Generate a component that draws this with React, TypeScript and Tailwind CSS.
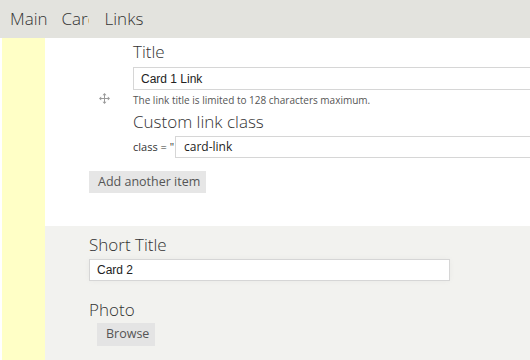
import React from "react";

const sans = { fontFamily: '"Open Sans", "Liberation Sans", sans-serif' };
const arial = { fontFamily: '"Liberation Sans", Arial, sans-serif' };

function DragIcon() {
  return (
    <svg width="11" height="11" viewBox="0 0 11 11" fill="#9a9a9a">
      <rect x="5" y="1.5" width="1" height="8" />
      <rect x="1.5" y="5" width="8" height="1" />
      <path d="M5.5 0 L7.5 2.2 L3.5 2.2 Z" />
      <path d="M5.5 11 L7.5 8.8 L3.5 8.8 Z" />
      <path d="M0 5.5 L2.2 3.5 L2.2 7.5 Z" />
      <path d="M11 5.5 L8.8 3.5 L8.8 7.5 Z" />
    </svg>
  );
}

export default function App() {
  return (
    <div className="w-[530px] h-[360px] overflow-hidden bg-white flex flex-col" style={sans}>
      <div className="h-[38px] bg-[#e3e3de] flex items-center text-[17px] font-light text-[#333] shrink-0">
        <span className="ml-[10px]">Main</span>
        <span className="ml-[14px] w-[27px] overflow-hidden whitespace-nowrap">Card</span>
        <span className="ml-[16px]">Links</span>
      </div>
      <div className="flex flex-1 pl-[2px]">
        <div className="w-[43px] bg-[#ffffc6] shrink-0" />
        <div className="flex-1 flex flex-col min-w-0 overflow-hidden">
          <div className="h-[188px] bg-white pl-[44px] shrink-0">
            <div className="flex">
              <div className="w-[44px] shrink-0 flex flex-col">
                <div className="h-[55px]" />
                <div className="pl-[10px]">
                  <DragIcon />
                </div>
              </div>
              <div className="flex-1 min-w-0">
                <div className="h-[24px] leading-[24px] mt-[2px] text-[17px] font-light text-[#333]">Title</div>
                <div className="mt-[3px] h-[23px] border border-[#d6d6d6] bg-white w-[420px] flex items-center pl-[7px] text-[12px] text-[#222]" style={arial}>
                  Card 1 Link
                </div>
                <div className="mt-[3px] h-[14px] leading-[14px] text-[10px] text-[#555]">
                  The link title is limited to 128 characters maximum.
                </div>
                <div className="mt-[3px] h-[24px] leading-[24px] text-[17px] font-light text-[#333]">Custom link class</div>
                <div className="mt-[2px] flex items-center h-[22px]">
                  <span className="text-[11px] text-[#333] w-[42px] shrink-0 whitespace-nowrap">class = "</span>
                  <div className="h-[22px] border border-[#d6d6d6] w-[420px] shrink-0 flex items-center pl-[8px] text-[12px] text-[#222]">
                    card-link
                  </div>
                </div>
              </div>
            </div>
            <div className="mt-[13px] inline-flex items-center h-[22px] w-[117px] bg-[#e6e6e6] pl-[9px] text-[12.5px] text-[#555]">
              Add another item
            </div>
          </div>
          <div className="flex-1 bg-[#f2f2ef] pl-[44px]">
            <div className="mt-[7px] h-[24px] leading-[24px] text-[17px] font-light text-[#333]">Short Title</div>
            <div className="mt-[2px] h-[22px] w-[361px] border border-[#d6d6d6] bg-white flex items-center pl-[7px] text-[12px] text-[#222] shadow-[0_0_6px_rgba(0,0,0,0.04)]" style={arial}>
              Card 2
            </div>
            <div className="mt-[19px] h-[20px] leading-[20px] text-[17px] font-light text-[#333]">Photo</div>
            <div className="ml-[8px] inline-flex items-center h-[23px] w-[58px] bg-[#e4e4e4] pl-[9px] text-[12.5px] text-[#555]">
              Browse
            </div>
          </div>
        </div>
      </div>
    </div>
  );
}
